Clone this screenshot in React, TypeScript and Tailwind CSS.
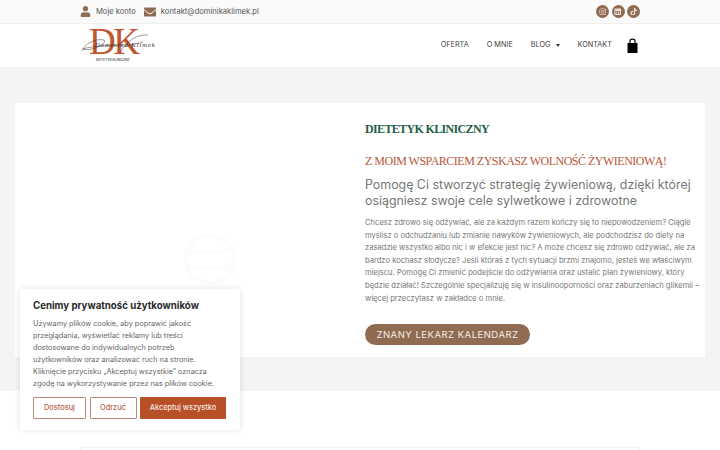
import { FaInstagram, FaLinkedin, FaTiktok, FaUser, FaEnvelope } from "react-icons/fa";

const sans = "font-['Inter','Liberation_Sans',sans-serif]";
const serif = "font-['Liberation_Serif',serif]";

function Social({ children }: { children: React.ReactNode }) {
  return (
    <span className="w-[13px] h-[13px] rounded-full bg-[#8f6b52] text-[#efe3da] flex items-center justify-center text-[7.5px]">
      {children}
    </span>
  );
}

function Logo() {
  return (
    <div className="relative w-[70px] h-[40px]">
      <div className={`${serif} absolute left-[9px] -top-[3px] text-[37px] leading-[37px] tracking-[-2.5px] text-[#c0562f] whitespace-nowrap`}>DK</div>
      <div className={`${serif} absolute left-[15px] top-[15px] text-[6.5px] leading-[7px] italic text-[#2f2b2b] tracking-[1px] whitespace-nowrap`}>Dominika Klimek</div>
      <svg className="absolute left-0 top-0" width="70" height="36" viewBox="0 0 70 36" fill="none" stroke="#3a3535" strokeWidth="0.5">
        <path d="M2 25 C4 18 16 12 24 14 C28 17 12 26 3 23 C10 20 36 19 46 19 C52 19 60 17 63 16" />
        <path d="M68 9 C58 8 47 14 40 27" />
      </svg>
      <div className={`${sans} absolute left-[16px] top-[32px] text-[3px] leading-[4px] font-semibold text-[#444] tracking-[0.1px] whitespace-nowrap`}>
        DIETETYK KLINICZNY
      </div>
    </div>
  );
}

export default function App() {
  return (
    <div className={`${sans} relative h-[450px] overflow-hidden bg-white`}>
      {/* top bar */}
      <div className="h-[23px] bg-[#fafafa] flex items-center pl-[80px] text-[7.6px] text-[#555]">
        <FaUser className="text-[#8f6b52] text-[11px]" />
        <span className="ml-[5px]">Moje konto</span>
        <FaEnvelope className="text-[#8f6b52] text-[12px] ml-[8px]" />
        <span className="ml-[5px]">kontakt@dominikaklimek.pl</span>
        <div className="ml-auto mr-[80px] flex gap-[2.5px]">
          <Social><FaInstagram /></Social>
          <Social><FaLinkedin /></Social>
          <Social><FaTiktok /></Social>
        </div>
      </div>

      {/* header */}
      <div className="h-[44px] flex items-center pl-[80px] border-t border-[#f0f0f0]">
        <Logo />
        <nav className="ml-auto mr-[82px] flex items-center text-[7.3px] font-normal text-[#444] whitespace-nowrap">
          <span>OFERTA</span>
          <span className="ml-[18px]">O MNIE</span>
          <span className="ml-[18px]">BLOG</span>
          <span className="ml-[5px] w-0 h-0 border-x-[2.5px] border-x-transparent border-t-[3px] border-t-[#333]" />
          <span className="ml-[18px]">KONTAKT</span>
          <svg className="ml-[15px]" width="11" height="15" viewBox="0 0 11 15">
            <path d="M0.5 5 H10.5 V15 H0.5 Z" fill="#000" />
            <path d="M3 5 V3 C3 0.5 8 0.5 8 3 V5" fill="none" stroke="#000" strokeWidth="1.2" />
          </svg>
        </nav>
      </div>

      {/* hero */}
      <div className="h-[324px] bg-[#f4f4f4] pt-[36px] px-[15px]">
        <div className="h-[254px] bg-white flex">
          <div className="w-[350px] shrink-0 flex justify-center">
            <svg className="mt-[128px] ml-[40px]" width="80" height="56" viewBox="0 0 80 56" fill="none" stroke="#fdfcfa" strokeWidth="4">
              <circle cx="40" cy="28" r="24" />
              <path d="M20 20 H60 M16 36 H64" />
            </svg>
          </div>
          <div className="flex-1 min-w-0 pt-[18px]">
            <h2 className={`${serif} text-[12px] leading-[16px] tracking-[-0.65px] font-bold text-[#1f6049]`}>DIETETYK KLINICZNY</h2>
            <h3 className={`${serif} mt-[16px] text-[12px] leading-[16px] tracking-[-0.5px] font-normal text-[#b5573a] whitespace-nowrap`}>
              Z MOIM WSPARCIEM ZYSKASZ WOLNOŚĆ ŻYWIENIOWĄ!
            </h3>
            <p className="mt-[8px] text-[12.4px] leading-[15.5px] text-[#777] whitespace-nowrap">
              Pomogę Ci stworzyć strategię żywieniową, dzięki której
              <br />
              osiągniesz swoje cele sylwetkowe i zdrowotne
            </p>
            <p className="mt-[9px] text-[7.6px] leading-[12.6px] text-[#777] whitespace-nowrap">
              Chcesz zdrowo się odżywiać, ale za każdym razem kończy się to niepowodzeniem? Ciągle
              <br />
              myślisz o odchudzaniu lub zmianie nawyków żywieniowych, ale podchodzisz do diety na
              <br />
              zasadzie wszystko albo nic i w efekcie jest nic? A może chcesz się zdrowo odżywiać, ale za
              <br />
              bardzo kochasz słodycze? Jeśli któraś z tych sytuacji brzmi znajomo, jesteś we właściwym
              <br />
              miejscu. Pomogę Ci zmienić podejście do odżywiania oraz ustalić plan żywieniowy, który
              <br />
              będzie działać! Szczególnie specjalizuję się w insulinooporności oraz zaburzeniach glikemii –
              <br />
              więcej przeczytasz w zakładce o mnie.
            </p>
            <div className="mt-[19px] w-[165px] h-[21px] rounded-full bg-[#8f6b52] text-[#f5ece5] text-[9.5px] tracking-[0.5px] flex items-center justify-center whitespace-nowrap">
              ZNANY LEKARZ KALENDARZ
            </div>
          </div>
        </div>
      </div>

      {/* next section */}
      <div className="mt-[56px] mx-[80px] h-[10px] bg-white border border-[#f1f1f1]" />

      {/* cookie banner */}
      <div className="absolute left-[20px] top-[289px] w-[220px] h-[141px] bg-white rounded-[3px] shadow-[0_0_6px_rgba(0,0,0,0.12)] px-[13px] pt-[11px]">
        <div className="text-[9.7px] leading-[12px] font-bold text-[#2a2a2a] whitespace-nowrap">Cenimy prywatność użytkowników</div>
        <p className="mt-[6px] text-[7.3px] leading-[12px] text-[#666] whitespace-nowrap">
          Używamy plików cookie, aby poprawić jakość
          <br />
          przeglądania, wyświetlać reklamy lub treści
          <br />
          dostosowane do indywidualnych potrzeb
          <br />
          użytkowników oraz analizować ruch na stronie.
          <br />
          Kliknięcie przycisku „Akceptuj wszystkie” oznacza
          <br />
          zgodę na wykorzystywanie przez nas plików cookie.
        </p>
        <div className="mt-[7px] flex gap-[3.5px] text-[7.4px] font-medium">
          <button className="w-[53px] h-[22px] border-[1.5px] border-[#bc8a78] text-[#b5664a] rounded-[1px]">Dostosuj</button>
          <button className="w-[47px] h-[22px] border-[1.5px] border-[#bc8a78] text-[#b5664a] rounded-[1px]">Odrzuć</button>
          <button className="w-[86px] h-[22px] bg-[#b84f27] text-[#f8e9e2] rounded-[1px]">Akceptuj wszystko</button>
        </div>
      </div>
    </div>
  );
}
